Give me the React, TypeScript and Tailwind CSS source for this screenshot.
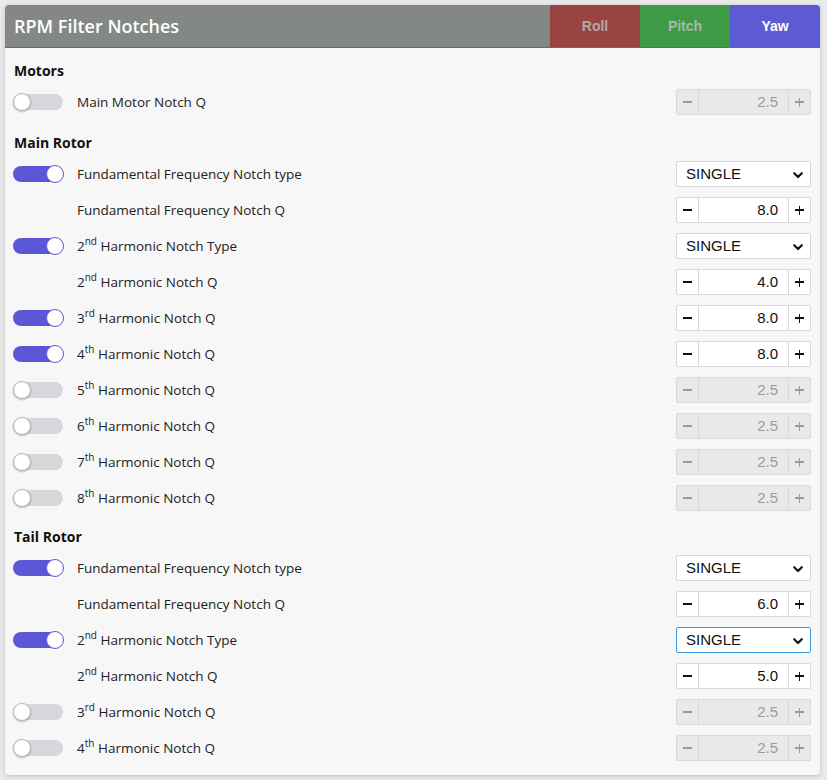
import React from "react";

type Row =
  | { kind: "num"; toggle: boolean | null; label: React.ReactNode; value: string; enabled: boolean }
  | { kind: "sel"; toggle: boolean | null; label: React.ReactNode; focused?: boolean };

const ord = (n: string, s: string, rest: string) => (
  <>
    {n}
    <sup className="text-[10px] -top-[6px]">{s}</sup> {rest}
  </>
);

function Toggle({ on }: { on: boolean }) {
  return (
    <div className="relative w-[50px] h-[20px] flex items-center">
      <div className={`w-[50px] h-[16px] rounded-full ${on ? "bg-[#5c57d6]" : "bg-[#d6d7db]"}`} />
      <div
        className={`absolute top-[1px] w-[18px] h-[18px] rounded-full bg-white border ${
          on ? "right-[-1px] border-[#5c57d6]" : "left-0 border-[#b8b8bc] shadow-[0_1px_2px_rgba(0,0,0,0.25)]"
        }`}
      />
    </div>
  );
}

function Chevron() {
  return (
    <svg width="12" height="12" viewBox="0 0 12 12" fill="none">
      <path d="M2.2 4.2 L6 8 L9.8 4.2" stroke="#111" strokeWidth="2.2" strokeLinecap="round" strokeLinejoin="round" />
    </svg>
  );
}

function Select({ focused }: { focused?: boolean }) {
  return (
    <div
      className={`w-[135px] h-[26px] bg-white rounded-[2px] border flex items-center justify-between pl-[9px] pr-[6px] pt-[1px] text-[15px] text-[#111] ${
        focused ? "border-[#3b9ae1]" : "border-[#d6d6d6]"
      }`}
      style={{ fontFamily: '"Liberation Sans", Arial, sans-serif' }}
    >
      <span>SINGLE</span>
      <Chevron />
    </div>
  );
}

function NumInput({ value, enabled }: { value: string; enabled: boolean }) {
  const txt = enabled ? "text-[#111]" : "text-[#9b9b9f]";
  const bg = enabled ? "bg-white" : "bg-[#e9e9ec]";
  return (
    <div
      className={`w-[135px] h-[26px] rounded-[2px] border border-[#d9d9dc] flex ${bg} text-[15px] ${txt}`}
      style={{ fontFamily: '"Liberation Sans", Arial, sans-serif' }}
    >
      <div className="w-[22px] flex items-center justify-center border-r border-[#d9d9dc]">
        <span className={`block w-[9px] h-[1.6px] ${enabled ? "bg-[#111]" : "bg-[#9b9b9f]"}`} />
      </div>
      <div className="flex-1 flex items-center justify-end pr-[10px] pt-[1px]">{value}</div>
      <div className="w-[22px] flex items-center justify-center border-l border-[#d9d9dc] relative">
        <span className={`absolute w-[9px] h-[1.6px] ${enabled ? "bg-[#111]" : "bg-[#9b9b9f]"}`} />
        <span className={`absolute w-[1.6px] h-[9px] ${enabled ? "bg-[#111]" : "bg-[#9b9b9f]"}`} />
      </div>
    </div>
  );
}

function RowView({ row }: { row: Row }) {
  return (
    <div className="h-[36px] flex items-center">
      <div className="w-[69px] pl-[5px]">{row.toggle !== null && <Toggle on={row.toggle} />}</div>
      <div className="flex-1 text-[13.5px] text-[#222] pt-[1px]">{row.label}</div>
      {row.kind === "sel" ? <Select focused={row.focused} /> : <NumInput value={row.value} enabled={row.enabled} />}
    </div>
  );
}

function Heading({ children, mt }: { children: React.ReactNode; mt: string }) {
  return (
    <div className={`h-[26px] flex items-center pb-[2px] text-[14px] font-bold text-[#111] pl-[6px] ${mt}`}>
      {children}
    </div>
  );
}

const motors: Row[] = [{ kind: "num", toggle: false, label: "Main Motor Notch Q", value: "2.5", enabled: false }];

const main: Row[] = [
  { kind: "sel", toggle: true, label: "Fundamental Frequency Notch type" },
  { kind: "num", toggle: null, label: "Fundamental Frequency Notch Q", value: "8.0", enabled: true },
  { kind: "sel", toggle: true, label: ord("2", "nd", "Harmonic Notch Type") },
  { kind: "num", toggle: null, label: ord("2", "nd", "Harmonic Notch Q"), value: "4.0", enabled: true },
  { kind: "num", toggle: true, label: ord("3", "rd", "Harmonic Notch Q"), value: "8.0", enabled: true },
  { kind: "num", toggle: true, label: ord("4", "th", "Harmonic Notch Q"), value: "8.0", enabled: true },
  { kind: "num", toggle: false, label: ord("5", "th", "Harmonic Notch Q"), value: "2.5", enabled: false },
  { kind: "num", toggle: false, label: ord("6", "th", "Harmonic Notch Q"), value: "2.5", enabled: false },
  { kind: "num", toggle: false, label: ord("7", "th", "Harmonic Notch Q"), value: "2.5", enabled: false },
  { kind: "num", toggle: false, label: ord("8", "th", "Harmonic Notch Q"), value: "2.5", enabled: false },
];

const tail: Row[] = [
  { kind: "sel", toggle: true, label: "Fundamental Frequency Notch type" },
  { kind: "num", toggle: null, label: "Fundamental Frequency Notch Q", value: "6.0", enabled: true },
  { kind: "sel", toggle: true, label: ord("2", "nd", "Harmonic Notch Type"), focused: true },
  { kind: "num", toggle: null, label: ord("2", "nd", "Harmonic Notch Q"), value: "5.0", enabled: true },
  { kind: "num", toggle: false, label: ord("3", "rd", "Harmonic Notch Q"), value: "2.5", enabled: false },
  { kind: "num", toggle: false, label: ord("4", "th", "Harmonic Notch Q"), value: "2.5", enabled: false },
];

export default function App() {
  return (
    <div className="w-[827px] h-[780px] bg-[#e9e9ea] pt-[5px] pl-[5px]" style={{ fontFamily: '"Open Sans", sans-serif' }}>
      <div className="w-[815px] bg-[#f7f7f7] rounded-[4px] shadow-[0_1px_4px_rgba(0,0,0,0.18)] overflow-hidden">
        <div className="h-[43px] flex bg-[#838884] border-b border-[#5d5bd4]">
          <div className="flex-1 flex items-center pl-[9px] text-[18px] font-semibold text-white">RPM Filter Notches</div>
          <div className="flex text-[14px] font-bold" style={{ fontFamily: '"Liberation Sans", Arial, sans-serif' }}>
            <div className="w-[90px] flex items-center justify-center bg-[#9a4441] text-[#b5a7a6]">Roll</div>
            <div className="w-[90px] flex items-center justify-center bg-[#3f9a45] text-[#a9b9a8]">Pitch</div>
            <div className="w-[90px] flex items-center justify-center bg-[#5d5bd4] text-white">Yaw</div>
          </div>
        </div>
        <div className="pl-[3px] pr-[9px] pt-[10px] pb-[9px]">
          <Heading mt="">Motors</Heading>
          {motors.map((r, i) => (
            <RowView key={i} row={r} />
          ))}
          <Heading mt="mt-[10px]">Main Rotor</Heading>
          {main.map((r, i) => (
            <RowView key={i} row={r} />
          ))}
          <Heading mt="mt-[8px]">Tail Rotor</Heading>
          {tail.map((r, i) => (
            <RowView key={i} row={r} />
          ))}
        </div>
      </div>
    </div>
  );
}
